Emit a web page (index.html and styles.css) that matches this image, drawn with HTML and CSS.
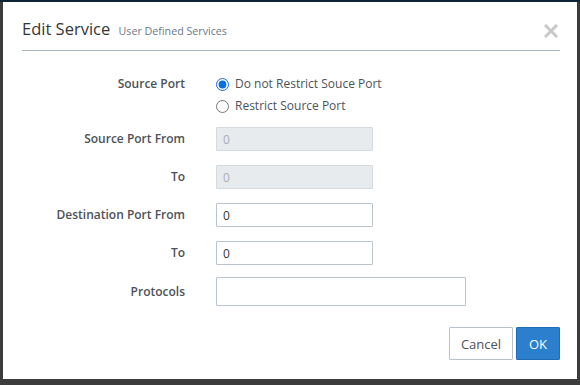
FILE: index.html
```html
<!DOCTYPE html>
<html>
<head>
    <link rel="stylesheet" href="styles.css">
</head>
<body>
    <div class="modal">
        <div class="modal-header">
            <h4 class="modal-title">Edit Service <small>User Defined Services</small></h4>
            <button class="close" aria-label="Close">
                <svg width="14" height="14" viewBox="0 0 14 14"><path d="M2 2 L12 12 M12 2 L2 12" stroke="#c9c9c9" stroke-width="3" stroke-linecap="square"/></svg>
            </button>
        </div>
        <form class="modal-body">
            <div class="row row-radio">
                <label class="control-label">Source Port</label>
                <div class="radios">
                    <label class="radio"><input type="radio" name="sp" checked> Do not Restrict Souce Port</label>
                    <label class="radio"><input type="radio" name="sp"> Restrict Source Port</label>
                </div>
            </div>
            <div class="row">
                <label class="control-label">Source Port From</label>
                <input class="form-control" type="text" value="0" disabled>
            </div>
            <div class="row">
                <label class="control-label">To</label>
                <input class="form-control" type="text" value="0" disabled>
            </div>
            <div class="row">
                <label class="control-label">Destination Port From</label>
                <input class="form-control" type="text" value="0">
            </div>
            <div class="row row-short">
                <label class="control-label">To</label>
                <input class="form-control" type="text" value="0">
            </div>
            <div class="row">
                <label class="control-label">Protocols</label>
                <input class="form-control wide" type="text">
            </div>
        </form>
        <div class="modal-footer">
            <button class="btn btn-default">Cancel</button>
            <button class="btn btn-primary">OK</button>
        </div>
    </div>
</body>
</html>
```

FILE: styles.css
```css
body {
    margin: 0;
    background: #3c3c3c;
    border-top: 2px solid #0d2435;
    font-family: "Open Sans", "Liberation Sans", sans-serif;
    color: #4d5258;
}
.modal {
    margin: 0 3px 6px 3px;
    height: 377px;
    background: #fff;
    display: flex;
    flex-direction: column;
}
.modal-header {
    display: flex;
    align-items: center;
    justify-content: space-between;
    margin: 0 17px 0 19px;
    height: 48px;
    border-bottom: 1px solid #a9b7c4;
}
.modal-title {
    margin: 4px 0 0 0;
    font-size: 16.5px;
    font-weight: normal;
    color: #363636;
}
.modal-title small {
    font-size: 10.7px;
    color: #6c7a86;
    margin-left: 4px;
}
.close {
    border: none;
    background: none;
    padding: 0;
    margin: 9px 2px 0 0;
    cursor: pointer;
    display: flex;
}
.modal-body {
    margin: 0;
    padding: 22px 0 0 0;
    flex: 1;
}
.row {
    display: flex;
    align-items: center;
    margin-bottom: 14px;
}
.row-radio {
    align-items: flex-start;
    margin-bottom: 10px;
}
.row-short {
    margin-bottom: 12px;
}
.control-label {
    width: 213px;
    text-align: right;
    font-size: 12px;
    font-weight: 600;
    line-height: 22px;
    padding-right: 31px;
    box-sizing: border-box;
}
.radios {
    display: flex;
    flex-direction: column;
}
.radio {
    display: flex;
    align-items: center;
    font-size: 12px;
    line-height: 22px;
    height: 22px;
}
.radio input {
    margin: 0 6px 0 0;
    width: 13px;
    height: 13px;
    accent-color: #0a70e0;
}
.form-control {
    width: 157px;
    height: 24px;
    box-sizing: border-box;
    border: 1px solid #b9c4ce;
    border-radius: 1px;
    padding: 0 6px;
    font-family: "Open Sans", "Liberation Sans", sans-serif;
    font-size: 12px;
    color: #363636;
    background: #fff;
}
.form-control:disabled {
    background: #e8ebee;
    border-color: #d5dadf;
    color: #a7adb3;
}
.form-control.wide {
    width: 250px;
    height: 29px;
}
.modal-footer {
    display: flex;
    justify-content: flex-end;
    gap: 3px;
    padding: 0 17px 19px 0;
}
.btn {
    height: 33px;
    font-family: "Open Sans", "Liberation Sans", sans-serif;
    font-size: 13px;
    border-radius: 1px;
    cursor: pointer;
    padding: 0;
}
.btn-default {
    width: 64px;
    background: #fff;
    border: 1px solid #b7c3cd;
    color: #4d5258;
}
.btn-primary {
    width: 44px;
    background: #2b7fcc;
    border: 1px solid #1e6db6;
    color: #fff;
}
```
